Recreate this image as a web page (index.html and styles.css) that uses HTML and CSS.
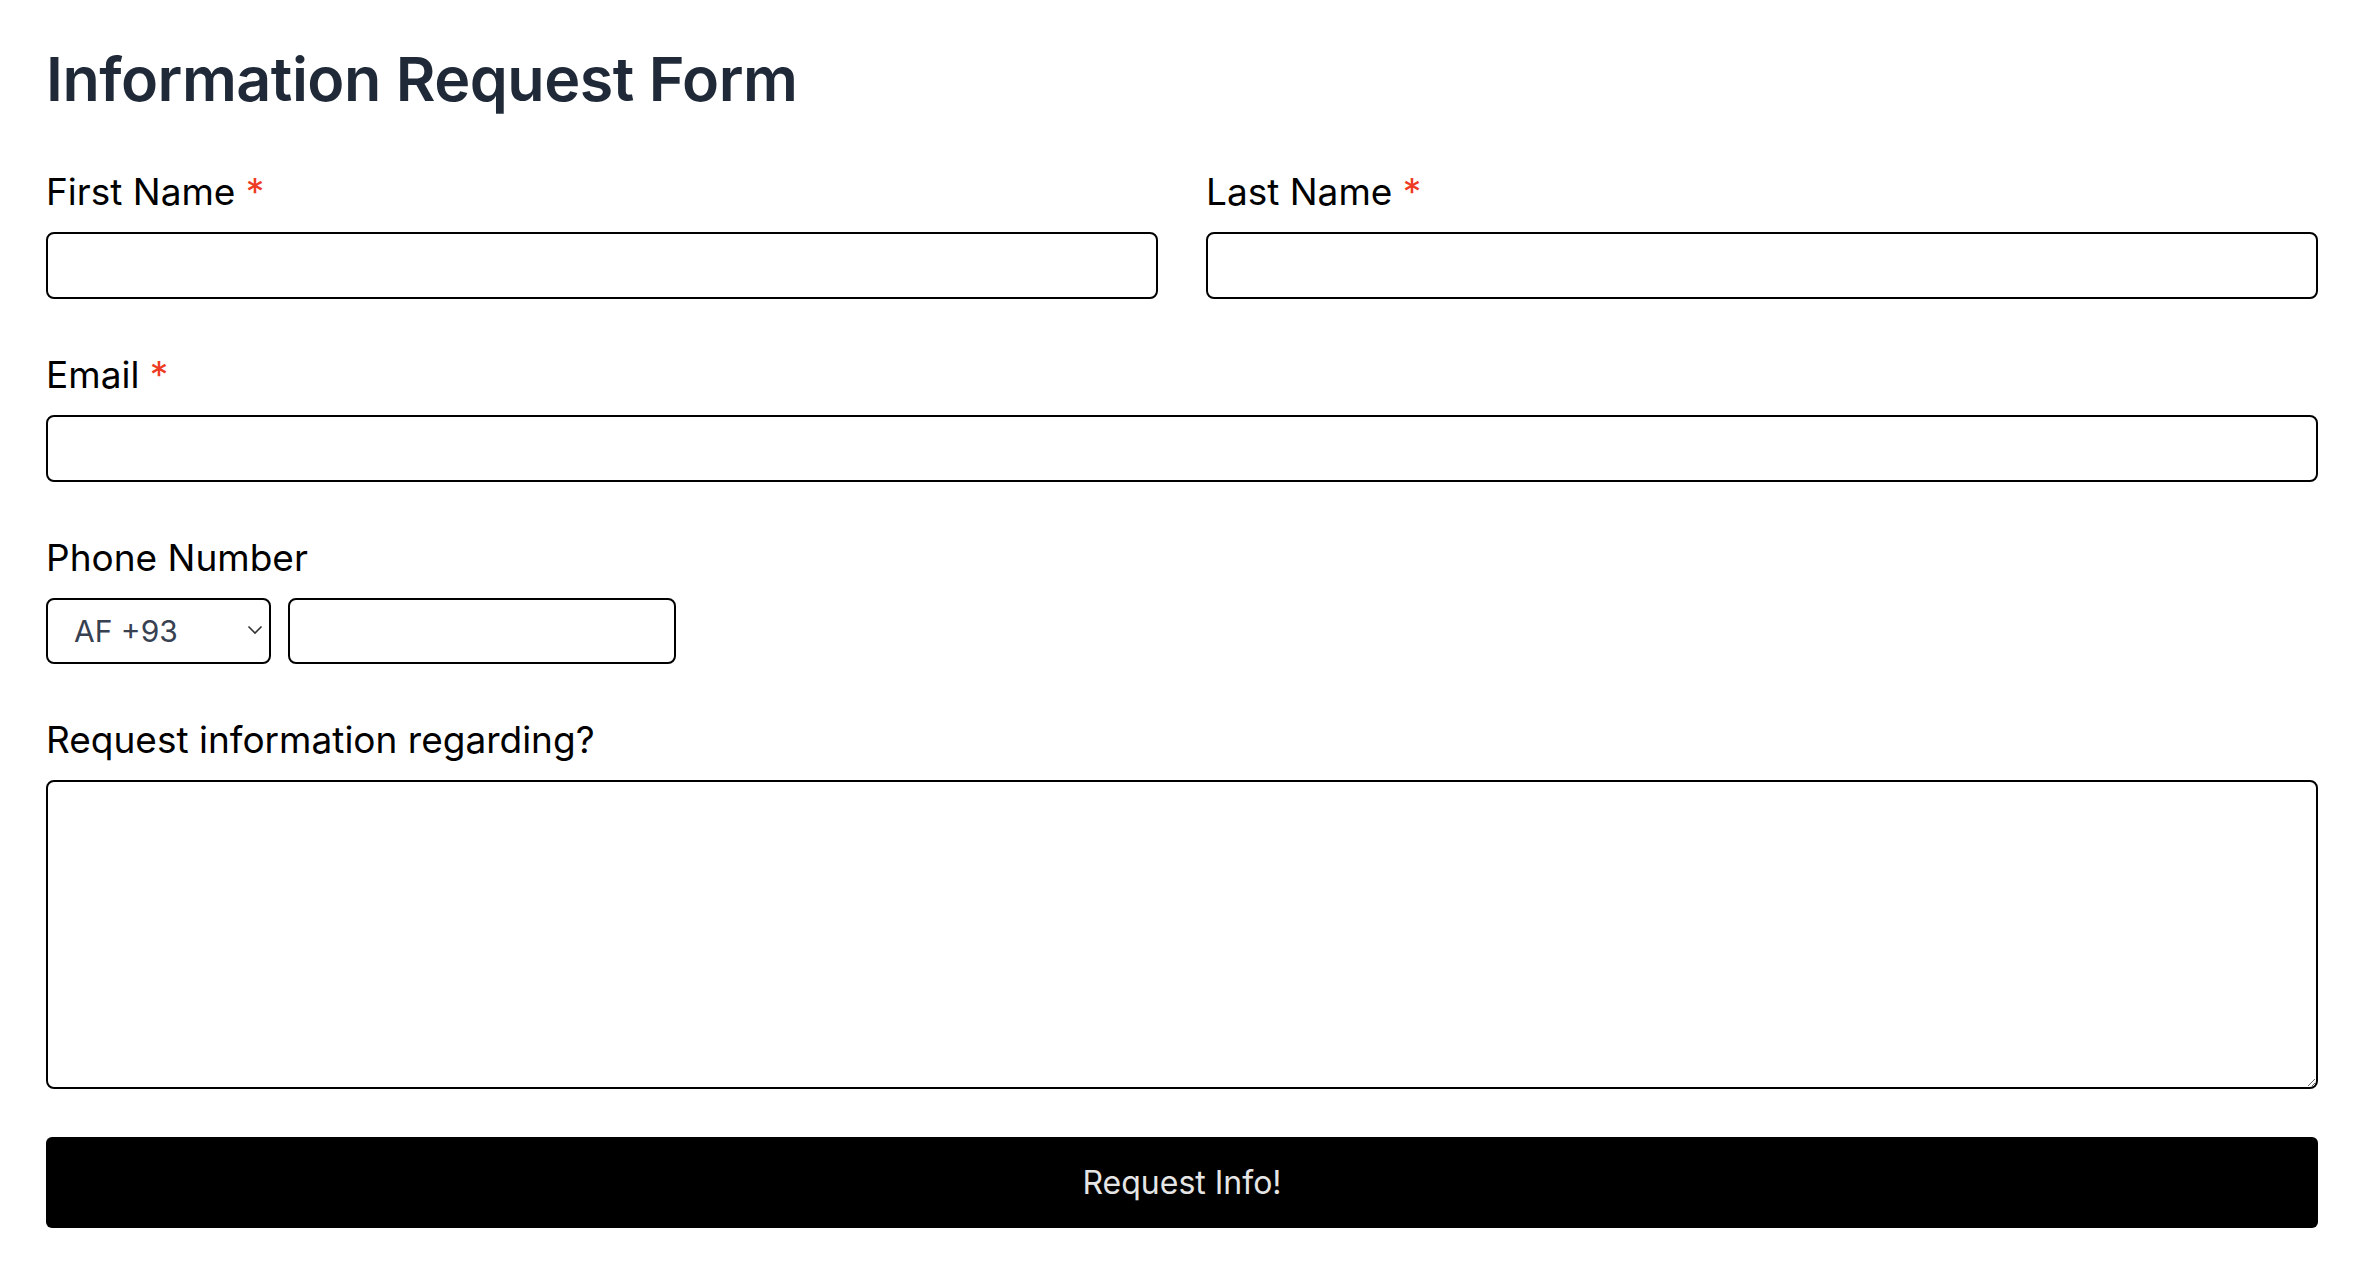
FILE: index.html
```html
<html>
<head>
	<title>Information Request Form</title>
	<link rel="stylesheet" href="styles.css">
</head>
<body>
<div class="page">
<h1>Information Request Form</h1>

<form class="request-form" onsubmit="return false;">
	<div class="row two">
		<div class="field">
			<label for="first">First Name <span class="req">*</span></label>
			<input id="first" type="text">
		</div>
		<div class="field">
			<label for="last">Last Name <span class="req">*</span></label>
			<input id="last" type="text">
		</div>
	</div>

	<div class="field">
		<label for="email">Email <span class="req">*</span></label>
		<input id="email" type="email">
	</div>

	<div class="field">
		<label for="phone">Phone Number</label>
		<div class="phone">
			<div class="select-wrap">
				<select id="country">
					<option>AF +93</option>
					<option>AL +355</option>
					<option>DZ +213</option>
					<option>US +1</option>
				</select>
				<svg class="chevron" width="16" height="10" viewBox="0 0 16 10"><path d="M1.5 1.5 L8 8 L14.5 1.5" fill="none" stroke="#333" stroke-width="1.6"/></svg>
			</div>
			<input id="phone" type="tel">
		</div>
	</div>

	<div class="field">
		<label for="about">Request information regarding?</label>
		<textarea id="about"></textarea>
	</div>

	<button type="submit">Request Info!</button>
</form>
</div>
</body>
</html>
```

FILE: styles.css
```css
body {
	margin:0;
	font-family:Inter, "Liberation Sans", sans-serif;
	background:#fff;
}
.page {
	padding:41px 62px 0 46px;
}
h1 {
	margin:0;
	font-size:61px;
	line-height:76px;
	font-weight:600;
	letter-spacing:-0.5px;
	color:#1f2937;
}
.request-form {
	display:flex;
	flex-direction:column;
	gap:54px;
	margin-top:53px;
}
.row.two {
	display:grid;
	grid-template-columns:1fr 1fr;
	gap:48px;
}
.field {
	display:flex;
	flex-direction:column;
}
label {
	font-size:37px;
	line-height:44px;
	color:#000;
	margin-bottom:18px;
}
.req {
	color:#ee3b24;
}
input, select, textarea {
	box-sizing:border-box;
	border:2px solid #000;
	border-radius:8px;
	background:#fff;
	font-family:inherit;
	outline:none;
}
input {
	height:67px;
	width:100%;
	padding:0 20px;
	font-size:30px;
}
.phone {
	display:flex;
	gap:17px;
}
.phone input {
	width:388px;
	height:66px;
}
.select-wrap {
	position:relative;
	width:225px;
	height:66px;
}
select {
	-webkit-appearance:none;
	appearance:none;
	width:100%;
	height:100%;
	padding:0 0 0 26px;
	font-size:30px;
	color:#374151;
}
.chevron {
	position:absolute;
	right:8px;
	top:27px;
	pointer-events:none;
}
textarea {
	height:309px;
	width:100%;
	font-size:30px;
	padding:16px;
}
button {
	height:91px;
	margin-top:-6px;
	border:none;
	border-radius:6px;
	background:#000;
	color:#e5e5e5;
	font-family:inherit;
	font-size:32px;
	cursor:pointer;
}
```
